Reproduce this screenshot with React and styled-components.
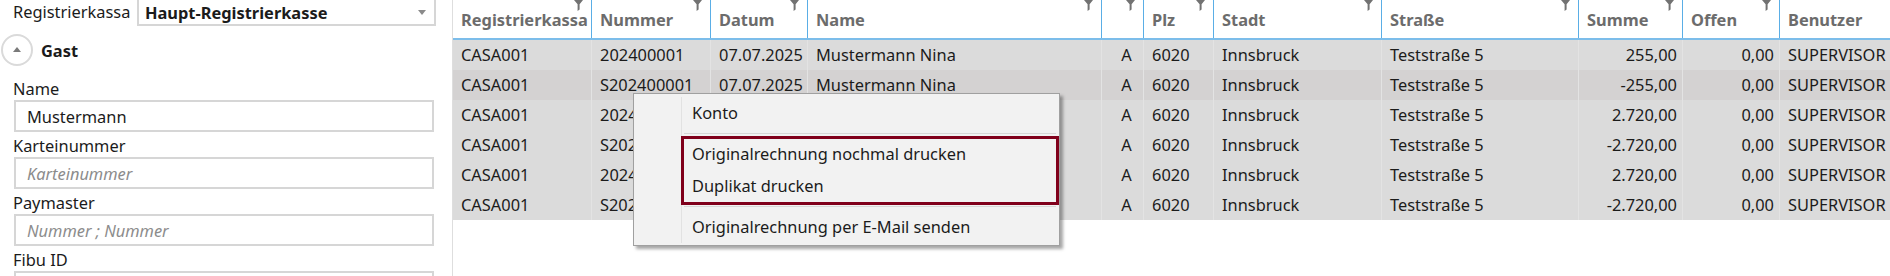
import styled, { createGlobalStyle } from 'styled-components'

const GlobalStyle = createGlobalStyle`
  html, body {
    margin: 0;
    padding: 0;
    background: #fff;
  }
  body {
    font-family: "Noto Sans", "Open Sans", sans-serif;
    font-size: 16.4px;
    color: #1b1b1b;
  }
`

const Screen = styled.div`
  display: flex;
  height: 276px;
  overflow: hidden;
  position: relative;
  width: 1890px;
`

// ---------- left form panel ----------

const Sidebar = styled.aside`
  border-right: 1px solid #dedede;
  flex: none;
  width: 452px;
`

const KassaRow = styled.div`
  align-items: center;
  display: flex;
  height: 28px;
  margin-top: -2px;
  padding-left: 13px;
`

const KassaLabel = styled.span`
  line-height: 28px;
`

const Select = styled.div`
  align-items: center;
  border: 2px solid #d6d6d6;
  box-sizing: border-box;
  display: flex;
  font-weight: 700;
  height: 28px;
  justify-content: space-between;
  margin-left: auto;
  margin-right: 16px;
  padding: 0 8px 0 6px;
  width: 299px;
`

const DownArrow = styled.span`
  border-left: 4px solid transparent;
  border-right: 4px solid transparent;
  border-top: 5px solid #8a8a8a;
  height: 0;
  width: 0;
`

const GroupHeader = styled.div`
  align-items: center;
  display: flex;
  font-weight: 700;
  height: 32px;
  margin: 8px 0 11px 1px;
`

const ExpandButton = styled.span`
  align-items: center;
  border: 2px solid #dadada;
  border-radius: 50%;
  box-sizing: border-box;
  display: flex;
  height: 32px;
  justify-content: center;
  margin-right: 8px;
  width: 32px;
`

const UpArrow = styled.span`
  border-bottom: 5px solid #7a7a7a;
  border-left: 4px solid transparent;
  border-right: 4px solid transparent;
  height: 0;
  margin-top: -1px;
  width: 0;
`

const Field = styled.div`
  margin-bottom: 2px;
`

const FieldLabel = styled.label`
  display: block;
  height: 23px;
  line-height: 23px;
  padding-left: 13px;
`

const TextInput = styled.input`
  border: 2px solid #d6d6d6;
  box-sizing: border-box;
  color: #1b1b1b;
  display: block;
  font: inherit;
  height: 32px;
  margin-left: 14px;
  outline: none;
  padding: 0 11px;
  width: 420px;

  &::placeholder {
    color: #8c8c8c;
    font-style: italic;
  }
`

// ---------- data grid ----------

const columns = '139px 119px 97px 294px 42px 70px 168px 197px 104px 97px 160px'

const Grid = styled.section`
  flex: 1;
  min-width: 0;
  overflow: hidden;
`

const HeaderRow = styled.div`
  border-bottom: 2px solid #7cbdea;
  display: grid;
  grid-template-columns: ${columns};
  height: 38px;
`

const HeaderCell = styled.div`
  align-items: center;
  border-right: 1px solid #5aaee6;
  color: #6c6c6c;
  display: flex;
  font-weight: 700;
  padding-left: 8px;
  position: relative;
  white-space: nowrap;
`

const FilterIcon = styled.svg`
  position: absolute;
  right: 8px;
  top: 0;
`

const Row = styled.div`
  background: ${p => (p.$hover ? '#d4d2d2' : '#dbdbdb')};
  display: grid;
  grid-template-columns: ${columns};
  height: 30px;
`

const Cell = styled.div`
  border-right: 1px solid #e3e3e3;
  line-height: 30px;
  overflow: hidden;
  padding: ${p => (p.$align === 'right' ? '0 5px 0 0' : '0 0 0 8px')};
  text-align: ${p => p.$align || 'left'};
  white-space: nowrap;
`

// ---------- context menu ----------

const Menu = styled.div`
  background: #f2f2f2;
  border: 1px solid #a0a0a0;
  box-shadow: 3px 3px 3px rgba(0, 0, 0, 0.35);
  left: 633px;
  padding: 3px 2px 2px 2px;
  position: absolute;
  top: 93px;
  width: 421px;
`

const MenuBody = styled.div`
  border-left: 1px solid #e2e2e2;
  margin-left: 45px;
`

const MenuItem = styled.div`
  height: 32px;
  line-height: 32px;
  padding-left: 10px;
  white-space: nowrap;
`

const MenuSeparator = styled.div`
  align-items: center;
  display: flex;
  height: 9px;
  padding: 0 1px 0 2px;

  &::after {
    background: #d7d7d7;
    content: '';
    flex: 1;
    height: 1px;
  }
`

const MarkedGroup = styled.div`
  position: relative;
`

const Marker = styled.span`
  border: 3px solid #80001b;
  bottom: -3px;
  left: -1px;
  pointer-events: none;
  position: absolute;
  right: -2px;
  top: -2px;
`

const headers = ['Registrierkassa', 'Nummer', 'Datum', 'Name', '', 'Plz', 'Stadt', 'Straße', 'Summe', 'Offen', 'Benutzer']
const aligns = ['left', 'left', 'left', 'left', 'center', 'left', 'left', 'left', 'right', 'right', 'left']

const rows = [
  ['202400001', '255,00'],
  ['S202400001', '-255,00'],
  ['202400002', '2.720,00'],
  ['S202400002', '-2.720,00'],
  ['202400003', '2.720,00'],
  ['S202400003', '-2.720,00'],
].map(([nr, sum]) => ['CASA001', nr, '07.07.2025', 'Mustermann Nina', 'A', '6020', 'Innsbruck', 'Teststraße 5', sum, '0,00', 'SUPERVISOR'])

const Funnel = () => (
  <FilterIcon width="9" height="11" viewBox="0 0 9 11">
    <path d="M0 0H9L5.6 4.2V9.6L3.6 11V4.2Z" fill="#727272" />
  </FilterIcon>
)

export default function App() {
  return (
    <>
      <GlobalStyle />
      <Screen>
        <Sidebar>
          <KassaRow>
            <KassaLabel>Registrierkassa</KassaLabel>
            <Select>
              Haupt-Registrierkasse
              <DownArrow />
            </Select>
          </KassaRow>

          <GroupHeader>
            <ExpandButton>
              <UpArrow />
            </ExpandButton>
            Gast
          </GroupHeader>

          <Field>
            <FieldLabel>Name</FieldLabel>
            <TextInput readOnly defaultValue="Mustermann" />
          </Field>
          <Field>
            <FieldLabel>Karteinummer</FieldLabel>
            <TextInput readOnly placeholder="Karteinummer" />
          </Field>
          <Field>
            <FieldLabel>Paymaster</FieldLabel>
            <TextInput readOnly placeholder="Nummer ; Nummer" />
          </Field>
          <Field>
            <FieldLabel>Fibu ID</FieldLabel>
            <TextInput readOnly />
          </Field>
        </Sidebar>

        <Grid>
          <HeaderRow>
            {headers.map((h, i) => (
              <HeaderCell key={i}>
                {h}
                <Funnel />
              </HeaderCell>
            ))}
          </HeaderRow>
          {rows.map((r, i) => (
            <Row key={i} $hover={i === 1}>
              {r.map((v, j) => (
                <Cell key={j} $align={aligns[j]}>{v}</Cell>
              ))}
            </Row>
          ))}
        </Grid>

        <Menu>
          <MenuBody>
            <MenuItem>Konto</MenuItem>
            <MenuSeparator />
            <MarkedGroup>
              <MenuItem>Originalrechnung nochmal drucken</MenuItem>
              <MenuItem>Duplikat drucken</MenuItem>
              <Marker />
            </MarkedGroup>
            <MenuSeparator />
            <MenuItem>Originalrechnung per E-Mail senden</MenuItem>
          </MenuBody>
        </Menu>
      </Screen>
    </>
  )
}
